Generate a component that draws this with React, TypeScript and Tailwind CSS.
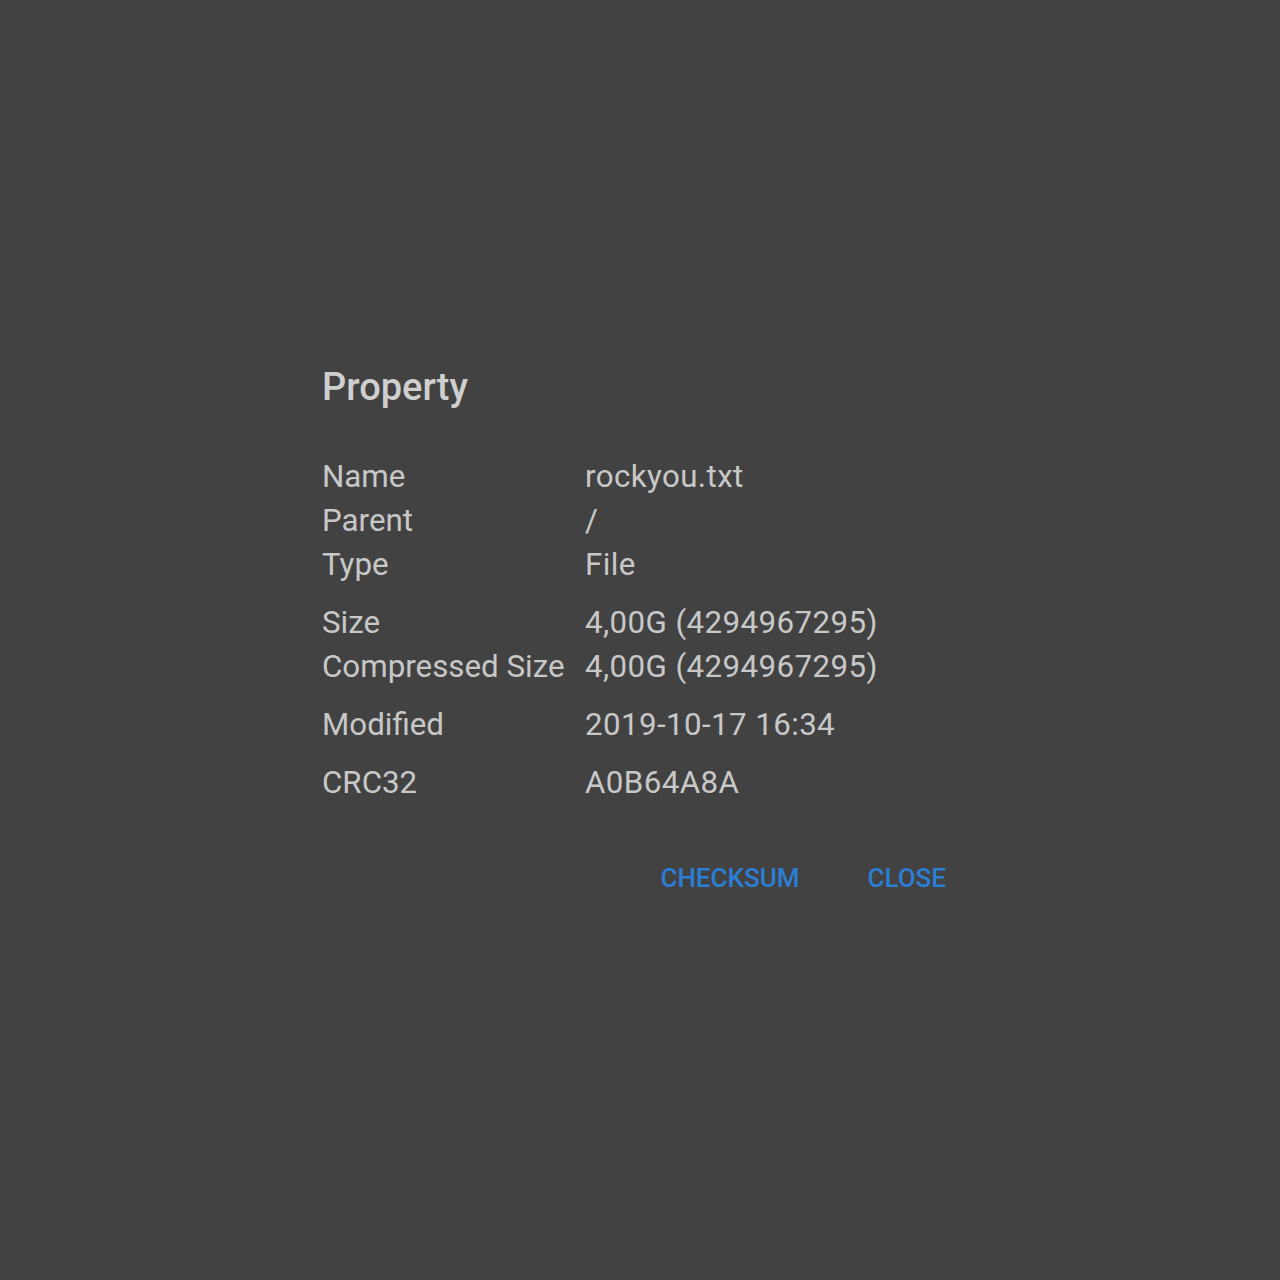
const rows: { label: string; value: string }[][] = [
  [
    { label: 'Name', value: 'rockyou.txt' },
    { label: 'Parent', value: '/' },
    { label: 'Type', value: 'File' },
  ],
  [
    { label: 'Size', value: '4,00G (4294967295)' },
    { label: 'Compressed Size', value: '4,00G (4294967295)' },
  ],
  [{ label: 'Modified', value: '2019-10-17 16:34' }],
  [{ label: 'CRC32', value: 'A0B64A8A' }],
];

export default function App() {
  return (
    <div
      className="w-[1280px] h-[1280px] bg-[#424242] pt-[363px] pl-[322px]"
      style={{ fontFamily: 'Roboto, "Noto Sans", sans-serif' }}
    >
      <div className="w-[624px] flex flex-col">
        {/* Dialog title */}
        <h2 className="text-[38px] leading-[48px] font-medium text-[#cfcfcf]">Property</h2>

        {/* Property groups */}
        <div className="mt-[44px] flex flex-col gap-[14px]">
          {rows.map((group, i) => (
            <div key={i} className="flex flex-col">
              {group.map((r) => (
                <div key={r.label} className="flex text-[31.3px] leading-[44px] text-[#c8c8c8]">
                  <span className="w-[263px] shrink-0">{r.label}</span>
                  <span className="tracking-[0.4px]">{r.value}</span>
                </div>
              ))}
            </div>
          ))}
        </div>

        {/* Actions */}
        <div className="mt-[55px] flex justify-end gap-[68px] text-[26px] leading-[36px] font-medium text-[#2b7ed4]">
          <button className="uppercase">Checksum</button>
          <button className="uppercase">Close</button>
        </div>
      </div>
    </div>
  );
}
